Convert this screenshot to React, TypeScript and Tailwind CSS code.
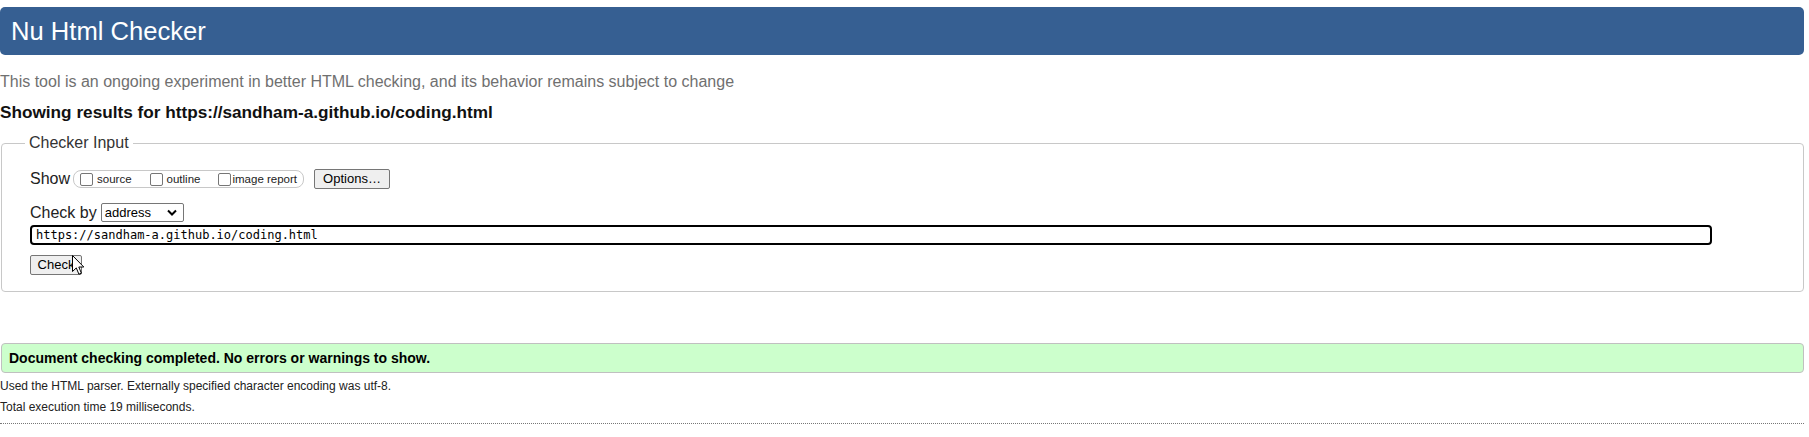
import React from "react";

function Checkbox() {
  return (
    <input
      type="checkbox"
      readOnly
      className="appearance-none m-0 w-[13px] h-[13px] border border-[#767676] rounded-[2px] bg-white shrink-0"
    />
  );
}

function Cursor() {
  return (
    <svg
      className="absolute left-[42px] top-[3px]"
      width="13"
      height="21"
      viewBox="0 0 13 21"
    >
      <path
        d="M0.5 0.5 L0.5 16.5 L4.3 12.9 L6.9 19.2 L9.4 18.2 L6.8 12 L11.8 12 Z"
        fill="#fff"
        stroke="#000"
        strokeWidth="1"
        strokeLinejoin="miter"
      />
    </svg>
  );
}

export default function App() {
  return (
    <div className="w-[1804px] font-['Liberation_Sans',Arial,sans-serif] text-[#222] bg-white">
      <h1 className="mt-[7px] h-[48px] rounded-[5px] bg-[#365f92] text-white text-[25.6px] leading-[48px] pl-[11px] font-normal">
        Nu Html Checker
      </h1>

      <p className="mt-[18px] text-[16px] leading-[18px] text-[#707070]">
        This tool is an ongoing experiment in better HTML checking, and its behavior remains subject to change
      </p>

      <p className="mt-[12px] text-[17.2px] leading-[18px] font-bold text-[#111]">
        Showing results for https://sandham-a.github.io/coding.html
      </p>

      <fieldset className="mt-[13px] ml-px border border-[#c8c8c8] rounded-[4px] pl-[23px] pr-0 pb-[19px]">
        <legend className="px-[4px] text-[16px] leading-[18px] text-[#333]">Checker Input</legend>
        <div className="pl-[5px]">
          <div className="mt-[17px] flex items-center h-[20px]">
            <span className="text-[16px] text-[#222] mr-[3px]">Show</span>
            <div className="h-[18px] border border-[#c8c8c8] rounded-[8px] pl-[6px] pr-[6px] flex items-center">
              <Checkbox />
              <span className="ml-[4px] mr-[18px] text-[11.5px] text-[#222] mt-[2px]">source</span>
              <Checkbox />
              <span className="ml-[4px] mr-[18px] text-[11.5px] text-[#222] mt-[2px]">outline</span>
              <Checkbox />
              <span className="ml-[1px] text-[11.5px] text-[#222] mt-[2px]">image report</span>
            </div>
            <button className="ml-[10px] w-[76px] h-[20px] bg-[#efefef] border border-[#767676] rounded-[2px] text-[13px] text-black leading-[18px]">
              Options…
            </button>
          </div>

          <div className="mt-[14px] flex items-center h-[19px]">
            <span className="text-[16px] text-[#222]">Check by</span>
            <div className="ml-[4px] w-[83px] h-[19px] border border-[#767676] rounded-[2px] bg-white flex items-center justify-between pl-[3px] pr-[6px]">
              <span className="text-[13px] text-black">address</span>
              <svg width="10" height="7" viewBox="0 0 10 7">
                <path d="M1 1.5 L5 5.5 L9 1.5" fill="none" stroke="#000" strokeWidth="2" />
              </svg>
            </div>
          </div>

          <div className="mt-[3px] w-[1682px] h-[20px] border-2 border-black rounded-[4px] bg-white flex items-center pl-[4px]">
            <span className="font-['DejaVu_Sans_Mono',monospace] text-[12px] text-black">
              https://sandham-a.github.io/coding.html
            </span>
          </div>

          <div className="relative mt-[7px] w-[52px] h-[20px]">
            <button className="w-[52px] h-[20px] bg-[#efefef] border border-[#767676] rounded-[2px] text-[13px] text-black leading-[18px]">
              Check
            </button>
            <Cursor />
          </div>
        </div>
      </fieldset>

      <div className="mt-[51px] ml-px h-[30px] border border-[#c0c0c0] rounded-[4px] bg-[#ccffcc] flex items-center pl-[7px]">
        <span className="text-[14px] font-bold text-black">
          Document checking completed. No errors or warnings to show.
        </span>
      </div>

      <p className="mt-[3px] text-[12px] leading-[21px] text-[#222]">
        Used the HTML parser. Externally specified character encoding was utf-8.
      </p>
      <p className="text-[12px] leading-[21px] text-[#222]">Total execution time 19 milliseconds.</p>

      <div className="mt-[5px] border-t border-dotted border-[#777]"></div>
    </div>
  );
}
